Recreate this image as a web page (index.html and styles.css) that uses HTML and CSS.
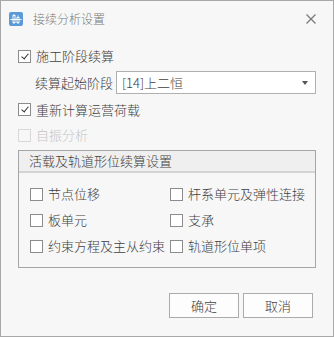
FILE: index.html
```html
<!DOCTYPE html>
<html>
<head>
<meta charset="utf-8">
<link rel="stylesheet" href="styles.css">
</head>
<body>
<div class="dialog">
  <div class="titlebar">
    <svg class="app-icon" width="14" height="14" viewBox="0 0 14 14">
      <rect x="0" y="0" width="14" height="14" rx="2" fill="#5b9ad8"/>
      <path d="M1.5 7.5 H12.5" stroke="#fff" stroke-width="1" fill="none"/>
      <rect x="4" y="3.5" width="2" height="7" fill="none" stroke="#fff" stroke-width="0.9"/>
      <rect x="8" y="5.5" width="2" height="5" fill="none" stroke="#fff" stroke-width="0.9"/>
      <path d="M5 2 V3.5 M9 3.5 V5.5 M5 10.5 V12 M9 10.5 V12" stroke="#fff" stroke-width="0.9"/>
    </svg>
    <span class="title">接续分析设置</span>
    <svg class="close" width="10" height="10" viewBox="0 0 10 10">
      <path d="M0.5 0.5 L9.5 9.5 M9.5 0.5 L0.5 9.5" stroke="#7a7a7a" stroke-width="1.3" fill="none"/>
    </svg>
  </div>
  <div class="body">
    <label class="row r1"><span class="cb checked"></span><span>施工阶段续算</span></label>
    <div class="row r2">
      <span class="sel-label">续算起始阶段</span>
      <div class="select"><span>[14]上二恒</span><span class="arrow"></span></div>
    </div>
    <label class="row r3"><span class="cb checked"></span><span>重新计算运营荷载</span></label>
    <label class="row r4 disabled"><span class="cb"></span><span>自振分析</span></label>
    <div class="group">
      <div class="group-head">活载及轨道形位续算设置</div>
      <div class="group-body">
        <label class="gitem"><span class="cb"></span><span>节点位移</span></label>
        <label class="gitem"><span class="cb"></span><span>杆系单元及弹性连接</span></label>
        <label class="gitem"><span class="cb"></span><span>板单元</span></label>
        <label class="gitem"><span class="cb"></span><span>支承</span></label>
        <label class="gitem"><span class="cb"></span><span>约束方程及主从约束</span></label>
        <label class="gitem"><span class="cb"></span><span>轨道形位单项</span></label>
      </div>
    </div>
    <div class="buttons">
      <div class="btn">确定</div>
      <div class="btn">取消</div>
    </div>
  </div>
</div>
</body>
</html>
```

FILE: styles.css
```css
* { box-sizing: border-box; }
html, body { margin: 0; padding: 0; }
body {
  font-family: "Noto Sans CJK SC", "Microsoft YaHei", sans-serif;
  font-size: 13px;
  font-weight: 300;
  color: #404040;
  background: #f7f7f7;
}
.dialog {
  width: 334px;
  height: 337px;
  border: 1px solid #a8a8a8;
  background: #f7f7f7;
  display: flex;
  flex-direction: column;
}
.titlebar {
  height: 35px;
  display: flex;
  align-items: center;
  padding-left: 8px;
  padding-right: 17px;
}
.app-icon { flex: none; }
.title {
  margin-left: 10px;
  font-size: 12px;
  color: #7a7a7a;
  line-height: 16px;
  flex: 1;
}
.close { flex: none; }
.body {
  padding: 7px 17px 0 17px;
  display: flex;
  flex-direction: column;
}
.row {
  display: flex;
  align-items: center;
  line-height: 16px;
}
.r1 { height: 26px; }
.r2 { height: 27px; }
.r3 { height: 27px; }
.r4 { height: 24px; }
.cb {
  flex: none;
  width: 13px;
  height: 13px;
  border: 1px solid #8c8c8c;
  background: #fff;
  margin-right: 5px;
  position: relative;
}
.cb.checked::after {
  content: "";
  position: absolute;
  left: 3.5px;
  top: 1px;
  width: 3px;
  height: 6px;
  border: solid #333;
  border-width: 0 1.3px 1.3px 0;
  transform: rotate(40deg);
}
.disabled { color: #c6c6c6; }
.disabled .cb { border-color: #d8d8d8; background: #f7f7f7; }
.sel-label { margin-left: 17px; width: 81px; flex: none; }
.select {
  width: 200px;
  height: 23px;
  border: 1px solid #b0b0b0;
  background: #fff;
  display: flex;
  align-items: center;
  justify-content: space-between;
  padding: 0 7px 0 5px;
}
.arrow {
  width: 0; height: 0;
  border-left: 3.5px solid transparent;
  border-right: 3.5px solid transparent;
  border-top: 4px solid #555;
}
.group {
  margin-top: 3px;
  width: 298px;
  border: 1px solid #a6a6a6;
}
.group-head {
  height: 22px;
  background: #efefef;
  border-bottom: 2px solid #d4d4d4;
  padding-left: 10px;
  display: flex;
  align-items: center;
  line-height: 16px;
}
.group-body {
  padding: 8px 0 8px 11px;
  display: grid;
  grid-template-columns: 140px 1fr;
  grid-auto-rows: 26px;
}
.gitem {
  display: flex;
  align-items: center;
  line-height: 16px;
  white-space: nowrap;
}
.buttons {
  margin-top: 25px;
  display: flex;
  justify-content: flex-end;
  gap: 4px;
  padding-right: 3px;
}
.btn {
  width: 70px;
  height: 25px;
  border: 1px solid #ababab;
  background: #fdfdfd;
  display: flex;
  align-items: center;
  justify-content: center;
  line-height: 16px;
}
```
